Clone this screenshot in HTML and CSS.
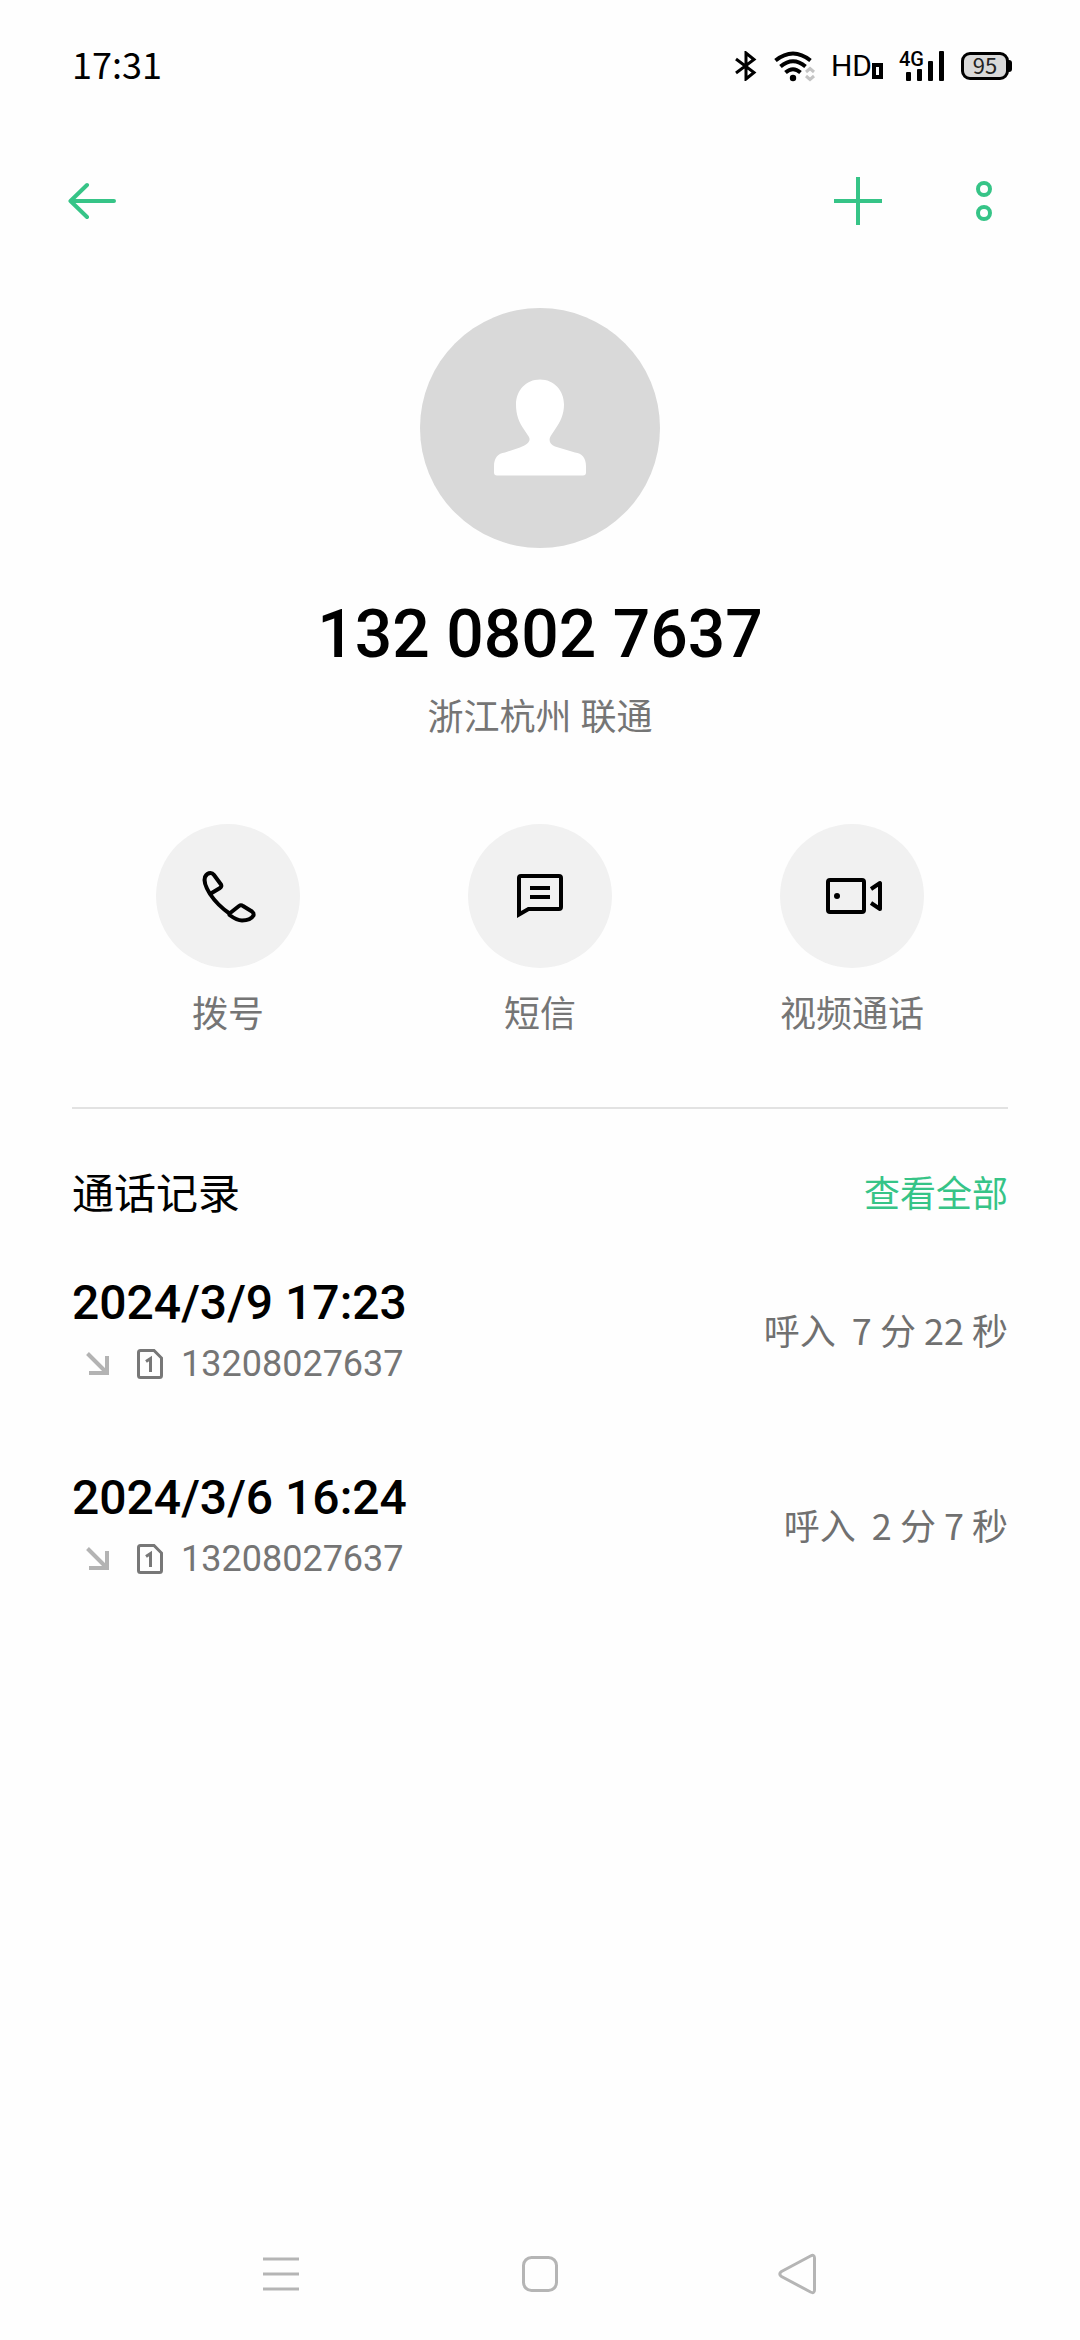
FILE: index.html
```html
<!DOCTYPE html>
<html lang="zh-CN">
<head>
<meta charset="utf-8">
<meta name="viewport" content="width=device-width, initial-scale=1">
<title>联系人详情</title>
<link rel="stylesheet" href="styles.css">
</head>
<body>
<div class="status-bar">
  <time class="clock">17:31</time>
  <div class="status-icons">
    <svg class="bluetooth" width="24" height="30" viewBox="0 0 24 30" aria-hidden="true"><path d="M2 8 20 21.500 12 28V2l8 6.500L2 22" fill="none" stroke="#000" stroke-width="3"/></svg>
    <svg class="wifi" width="41" height="31" viewBox="0 0 41 31" aria-hidden="true">
      <g fill="none" stroke="#000" stroke-width="4"><path d="M1.500 9.500Q19-4.500 36.500 9.500"/><path d="M6.500 15.500Q19 5 31.500 15.500"/><path d="M11.500 21.500Q19 15 26.500 21.500"/></g>
      <circle cx="19" cy="27" r="3.200"/>
      <path d="m32 21 4-3.500 4 3.500M32 25l4 3.500 4-3.500" fill="none" stroke="#c4c4c4" stroke-width="3"/>
    </svg>
    <div class="volte"><span class="volte-text">HD</span><svg width="11" height="16" viewBox="0 0 11 16" aria-hidden="true"><path d="M2 2h7v12H2z" fill="none" stroke="#000" stroke-width="4"/></svg></div>
    <div class="signal">
      <span class="signal-type">4G</span>
      <svg width="46" height="30" viewBox="0 0 46 30" aria-hidden="true"><rect x="7" y="21" width="5" height="9" rx="1"/><rect x="18" y="18" width="5" height="12" rx="1"/><rect x="29" y="10" width="5" height="20" rx="1"/><rect x="40" y="0" width="5" height="30" rx="1"/></svg>
    </div>
    <div class="battery"><span class="battery-level">95</span><span class="battery-tip"></span></div>
  </div>
</div>

<header class="app-bar">
  <button class="icon-button" aria-label="返回"><svg width="48" height="48" viewBox="0 0 48 48"><path d="M19 8 2.500 24 19 40M3 24h43" fill="none" stroke="currentColor" stroke-width="4" stroke-linecap="round" stroke-linejoin="round"/></svg></button>
  <div class="app-actions">
    <button class="icon-button" aria-label="添加"><svg width="48" height="48" viewBox="0 0 48 48"><path d="M24 0v48M0 24h48" fill="none" stroke="currentColor" stroke-width="4"/></svg></button>
    <button class="icon-button" aria-label="更多"><svg width="48" height="48" viewBox="0 0 48 48"><g fill="none" stroke="currentColor" stroke-width="4"><circle cx="24" cy="12" r="6"/><circle cx="24" cy="36" r="6"/></g></svg></button>
  </div>
</header>

<main class="content">
  <section class="profile">
    <svg class="avatar" width="240" height="240" viewBox="0 0 240 240" aria-hidden="true">
      <circle cx="120" cy="120" r="120" fill="#d9d9d9"/>
      <path d="M120 71.500c14 0 24 11 24 25 0 10-4 18-9 25l-4 6c-3 5-1 9 4 11l20 6c7 1 11 5 11 14v6q0 3-3 3H77q-3 0-3-3v-6c0-9 4-13 11-14l15-5c8-3 12-7 8-12l-4-6c-5-7-8-15-8-25 0-14 10-25 24-25z" fill="#fff"/>
    </svg>
    <h1 class="phone-number">132 0802 7637</h1>
    <p class="location">浙江杭州 联通</p>
  </section>

  <div class="actions">
    <button class="action">
      <span class="action-icon"><svg width="72" height="72" viewBox="0 0 72 72" fill="none" stroke="#000" stroke-width="4" stroke-linejoin="round" aria-hidden="true"><path d="M18 34C13 26 11.500 21 13 17q2-4 5.500-4 2 0 3.500 2l7 9.500q1 2-1 3.500zM18 34C24 43 31 49 37.500 53.500"/><path d="M37.500 53.500 47 46q2-1.500 4 0l9 5.500q2 1.500 1.500 4-3 5-11.500 5-5 0-12.500-5.500z"/></svg></span>
      <span class="action-label">拨号</span>
    </button>
    <button class="action">
      <span class="action-icon"><svg width="72" height="72" viewBox="0 0 72 72" fill="none" stroke="#000" stroke-width="4" aria-hidden="true"><path d="M15 54.500V18q0-2 2-2h38q2 0 2 2v29q0 2-2 2H24.500zM26 28h20M26 37h20"/></svg></span>
      <span class="action-label">短信</span>
    </button>
    <button class="action">
      <span class="action-icon"><svg width="72" height="72" viewBox="0 0 72 72" fill="none" stroke="#000" stroke-width="4" aria-hidden="true"><rect x="12" y="20" width="36" height="32" rx="2"/><path d="m55 29 9-6v26l-9-6" stroke-linejoin="round"/><circle cx="21" cy="36" r="3" fill="#000" stroke="none"/></svg></span>
      <span class="action-label">视频通话</span>
    </button>
  </div>

  <section class="history">
    <div class="history-head">
      <h2 class="history-title">通话记录</h2>
      <a class="view-all" href="#all">查看全部</a>
    </div>
    <ul class="calls">
      <li class="call">
        <div class="call-info">
          <time class="call-time">2024/3/9 17:23</time>
          <div class="call-line">
            <svg class="incoming" width="24" height="24" viewBox="0 0 24 24" aria-hidden="true"><path d="m1.500 1.500 19 19M21 4v17H3" fill="none" stroke="#b3b3b3" stroke-width="4"/></svg>
            <svg class="sim" width="26" height="30" viewBox="0 0 26 30" aria-hidden="true"><path d="M3.500 1.500H17L24.500 9v17.500q0 2-2 2h-19q-2 0-2-2v-23q0-2 2-2z" fill="none" stroke="#777" stroke-width="3"/><path d="M9 12.500 13.500 9.500V23" fill="none" stroke="#777" stroke-width="3"/></svg>
            <span>13208027637</span>
          </div>
        </div>
        <span class="call-duration">呼入&nbsp; 7 分 22 秒</span>
      </li>
      <li class="call">
        <div class="call-info">
          <time class="call-time">2024/3/6 16:24</time>
          <div class="call-line">
            <svg class="incoming" width="24" height="24" viewBox="0 0 24 24" aria-hidden="true"><path d="m1.500 1.500 19 19M21 4v17H3" fill="none" stroke="#b3b3b3" stroke-width="4"/></svg>
            <svg class="sim" width="26" height="30" viewBox="0 0 26 30" aria-hidden="true"><path d="M3.500 1.500H17L24.500 9v17.500q0 2-2 2h-19q-2 0-2-2v-23q0-2 2-2z" fill="none" stroke="#777" stroke-width="3"/><path d="M9 12.500 13.500 9.500V23" fill="none" stroke="#777" stroke-width="3"/></svg>
            <span>13208027637</span>
          </div>
        </div>
        <span class="call-duration">呼入&nbsp; 2 分 7 秒</span>
      </li>
    </ul>
  </section>
</main>

<nav class="nav-bar" aria-label="系统导航">
  <button class="nav-button" aria-label="最近任务"><svg width="42" height="42" viewBox="0 0 42 42"><path d="M3 6h36M3 21h36M3 36h36"/></svg></button>
  <button class="nav-button" aria-label="主页"><svg width="42" height="42" viewBox="0 0 42 42"><rect x="4.500" y="4.500" width="33" height="33" rx="8"/></svg></button>
  <button class="nav-button" aria-label="返回上一页"><svg width="42" height="42" viewBox="0 0 42 42"><path d="M3.500 18.500 32.500 3q4-2 4 2v32q0 4-4 2L3.500 23.500q-3.500-2.500 0-5z"/></svg></button>
</nav>
</body>
</html>
```
FILE: styles.css
```css
* {
  box-sizing: border-box;
}

body {
  margin: 0;
  min-height: 100vh;
  display: flex;
  flex-direction: column;
  background: #fefefe;
  color: #000;
  font-family: Roboto, "Noto Sans CJK SC", sans-serif;
  font-size: 36px;
  line-height: 48px;
}

h1, h2, p, ul {
  margin: 0;
  padding: 0;
}

button {
  padding: 0;
  border: 0;
  background: none;
  color: inherit;
  font: inherit;
}

svg {
  display: block;
  flex: none;
}

/* Status bar */
.status-bar {
  height: 132px;
  padding: 0 68px 0 72px;
  display: flex;
  align-items: center;
  justify-content: space-between;
}

.clock {
  padding-bottom: 6px;
  font-family: "Noto Sans CJK SC", sans-serif;
}

.status-icons {
  display: flex;
  align-items: center;
  gap: 16px;
}

.volte {
  display: flex;
  align-items: flex-end;
}

.volte-text {
  font-size: 30px;
  line-height: 26px;
}

.signal {
  position: relative;
}

.signal-type {
  position: absolute;
  top: 0;
  left: 0;
  font-size: 20px;
  font-weight: 500;
  line-height: 16px;
}

.battery {
  position: relative;
  width: 48px;
  height: 28px;
  margin-right: 3px;
  display: flex;
  align-items: center;
  justify-content: center;
  border: 3px solid #000;
  border-radius: 9px;
  background: #d9d9d9;
}

.battery-level {
  padding-bottom: 4px;
  font-family: "Noto Sans CJK SC", sans-serif;
  font-size: 22px;
  line-height: 22px;
  color: #222;
}

.battery-tip {
  position: absolute;
  right: -6px;
  width: 4px;
  height: 12px;
  border-radius: 0 3px 3px 0;
  background: #000;
}

/* Top bar */
.app-bar {
  height: 138px;
  padding: 0 72px 0 68px;
  display: flex;
  align-items: center;
  justify-content: space-between;
  color: #36c487;
}

.app-actions {
  display: flex;
  gap: 78px;
}

/* Contact */
.content {
  flex: 1;
  padding: 38px 72px 0;
}

.profile {
  display: flex;
  flex-direction: column;
  align-items: center;
  text-align: center;
}

.phone-number {
  margin-top: 48px;
  font-size: 66px;
  font-weight: 500;
  line-height: 78px;
}

.location {
  margin-top: 20px;
  color: #757575;
}

.actions {
  display: grid;
  grid-template-columns: repeat(3, 1fr);
  padding: 82px 0 68px;
  border-bottom: 2px solid #e2e2e2;
}

.action {
  display: flex;
  flex-direction: column;
  align-items: center;
  gap: 23px;
}

.action-icon {
  width: 144px;
  height: 144px;
  display: grid;
  place-items: center;
  border-radius: 50%;
  background: #f1f1f1;
}

.action-label {
  color: #757575;
}

/* Call history */
.history-head {
  padding: 56px 0 8px;
  display: flex;
  align-items: center;
  justify-content: space-between;
}

.history-title {
  font-size: 42px;
  font-weight: 400;
  line-height: 60px;
}

.view-all {
  color: #36c487;
  text-decoration: none;
}

.calls {
  list-style: none;
}

.call {
  padding: 40px 0;
  display: flex;
  align-items: center;
  justify-content: space-between;
}

.call-info {
  display: flex;
  flex-direction: column;
  gap: 7px;
}

.call-time {
  font-size: 48px;
  font-weight: 500;
  line-height: 60px;
}

.call-line {
  padding-left: 14px;
  display: flex;
  align-items: center;
  color: #757575;
}

.sim {
  margin: 0 18px 0 27px;
}

.call-duration {
  padding-bottom: 4px;
  color: #707070;
  font-family: "Noto Sans CJK SC", sans-serif;
}

/* System navigation */
.nav-bar {
  height: 132px;
  display: flex;
  align-items: center;
  justify-content: center;
}

.nav-button {
  width: 24%;
  display: grid;
  place-items: center;
}

.nav-button svg {
  fill: none;
  stroke: #b5b5b5;
  stroke-width: 3px;
}
```
